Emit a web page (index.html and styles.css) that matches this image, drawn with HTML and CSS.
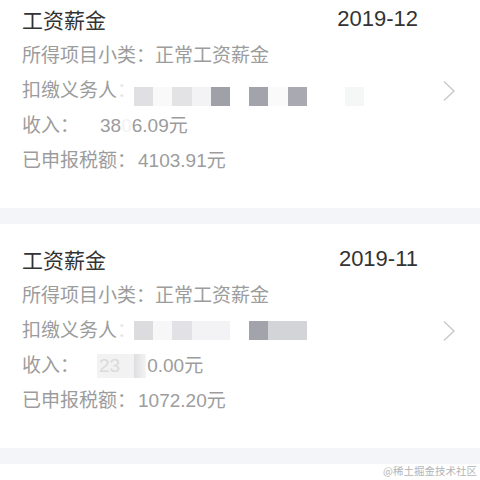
FILE: index.html
```html
<!DOCTYPE html>
<html lang="zh-CN">
<head>
<meta charset="utf-8">
<link rel="stylesheet" href="styles.css">
</head>
<body>
<div class="list">
  <div class="card">
    <div class="main">
      <div class="head"><span class="title">工资薪金</span><span class="date">2019-12</span></div>
      <div class="line">所得项目小类：正常工资薪金</div>
      <div class="line">扣缴义务人<span class="faint-colon">：</span><span class="mosaic shift"><i class="m e0"></i><i class="m f9"></i><i class="m e3"></i><i class="m f3"></i><i class="m d9f"></i><i class="m ff"></i><i class="m da2"></i><i class="m fa"></i><i class="m da8"></i><i class="m ff"></i><i class="m ff"></i><i class="m f5"></i></span></div>
      <div class="line">收入：<span class="gap"></span>38<span class="ghost">0</span>6.09元</div>
      <div class="line">已申报税额：<span class="num">4103.91元</span></div>
    </div>
    <div class="side">
      <svg class="chev" width="14" height="22" viewBox="0 0 14 22"><path d="M2 1.5 L12 11 L2 20.5" fill="none" stroke="#c8c8cc" stroke-width="1.4"/></svg>
    </div>
  </div>
  <div class="band"></div>
  <div class="card">
    <div class="main">
      <div class="head"><span class="title">工资薪金</span><span class="date">2019-11</span></div>
      <div class="line">所得项目小类：正常工资薪金</div>
      <div class="line">扣缴义务人<span class="faint-colon">：</span><span class="mosaic"><i class="m dc"></i><i class="m f7"></i><i class="m e2"></i><i class="m f3"></i><i class="m f3"></i><i class="m ff"></i><i class="m da2"></i><i class="m d3"></i><i class="m d3"></i></span></div>
      <div class="line">收入：<span class="gap2"></span><span class="blurbox">23</span><span class="blurfade"></span>0.00元</div>
      <div class="line">已申报税额：<span class="num">1072.20元</span></div>
    </div>
    <div class="side">
      <svg class="chev" width="14" height="22" viewBox="0 0 14 22"><path d="M2 1.5 L12 11 L2 20.5" fill="none" stroke="#c8c8cc" stroke-width="1.4"/></svg>
    </div>
  </div>
  <div class="band"></div>
</div>
<div class="watermark">@稀土掘金技术社区</div>
</body>
</html>
```

FILE: styles.css
```css
html, body {
  margin: 0;
  padding: 0;
  background: #ffffff;
  font-family: "Liberation Sans", "Noto Sans CJK SC", sans-serif;
  overflow: hidden;
}
.list {
  margin-top: -16px;
}
.card {
  display: flex;
  height: 224px;
  box-sizing: border-box;
  padding: 22px 24px 0 22px;
  background: #ffffff;
}
.main {
  flex: 1;
  display: flex;
  flex-direction: column;
}
.head {
  display: flex;
  justify-content: space-between;
  align-items: center;
  height: 26px;
  margin-bottom: 6px;
  color: #333333;
}
.title {
  font-size: 21px;
}
.date {
  font-size: 22px;
}
.line {
  height: 35px;
  line-height: 35px;
  font-size: 19px;
  color: #9c9c9c;
  display: flex;
  align-items: center;
  white-space: nowrap;
}
.num {
  margin-left: 2px;
}
.faint-colon {
  color: #e6e6e6;
}
.mosaic {
  display: inline-flex;
  margin-left: -2px;
}
.mosaic.shift {
  position: relative;
  top: 6px;
}
.m {
  display: block;
  width: 19.2px;
  height: 19px;
}
.e0 { background: #e0e0e2; }
.f9 { background: #f9f9f9; }
.e3 { background: #e3e3e5; }
.f3 { background: #f3f3f5; }
.d9f { background: #9fa0a8; }
.ff { background: #ffffff; }
.da2 { background: #a2a3ab; }
.fa { background: #fafafa; }
.da8 { background: #a8a9b1; }
.f5 { background: #f5f6f6; }
.dc { background: #dcdcde; }
.f7 { background: #f7f7f7; }
.e2 { background: #e2e2e6; }
.d3 { background: #d3d4d8; }
.gap {
  display: inline-block;
  width: 21px;
}
.ghost {
  color: #f2f2f2;
}
.gap2 {
  display: inline-block;
  width: 18px;
}
.blurbox {
  display: inline-block;
  padding: 0 14px 0 2px;
  line-height: 24px;
  background: #f2f2f3;
  color: #dadada;
}
.blurfade {
  display: inline-block;
  width: 12px;
  height: 24px;
  background: linear-gradient(to right, #dedee0, #f4f4f5);
  margin-right: 1px;
}
.side {
  width: 14px;
  margin-left: 24px;
  padding-top: 74px;
}
.chev {
  display: block;
}
.band {
  height: 16px;
  background: #f4f5f8;
}
.watermark {
  position: absolute;
  right: 3px;
  bottom: 2px;
  font-size: 10.5px;
  color: #b4b4b4;
  font-family: "Noto Sans CJK SC", sans-serif;
}
```
